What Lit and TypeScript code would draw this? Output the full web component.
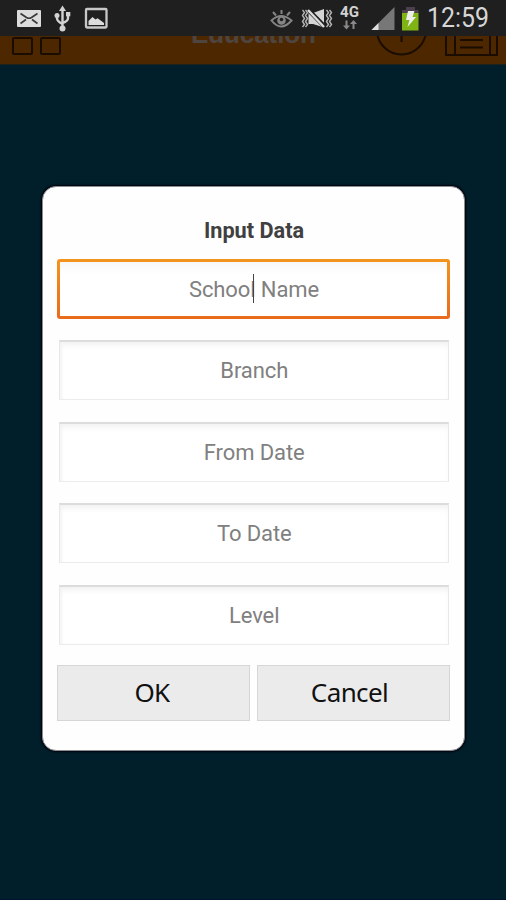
import { LitElement, html, css, svg } from "lit";
import { customElement, property } from "lit/decorators.js";

@customElement("status-bar")
class StatusBar extends LitElement {
  static styles = css`
    :host { display: block; height: 36px; background: #1f1f1f; }
    svg { display: block; }
    .clock { font: 27px Roboto, sans-serif; fill: #d6d6d6; }
    .net { font: bold 15px Roboto, sans-serif; fill: #d2d2d2; }
  `;
  render() {
    return html`<svg width="506" height="36" viewBox="0 0 506 36">
      <rect x="17" y="10" width="24" height="17" rx="1" fill="#dcdcdc" />
      <path d="M20.500 13.500l6 4q2.500 1.500 5 0l6-4M20.500 23.500l5.500-4M37.500 23.500l-5.500-4" fill="none" stroke="#3a3a3a" stroke-width="1.700" />
      <g fill="none" stroke="#d2d2d2" stroke-width="2.400">
        <path d="M62.500 29V9M57 16v2.500q0 2.500 5.500 5.500M68 14v4.500q0 2.500-5.500 4.500" />
      </g>
      <g fill="#d2d2d2">
        <path d="M62.500 5.500l3.500 5.500h-7z" /><circle cx="62.500" cy="28.500" r="3" />
        <circle cx="57" cy="15.500" r="2.500" /><rect x="66" y="12" width="4.300" height="4.300" />
      </g>
      <rect x="86" y="9" width="20.500" height="18.500" rx="1" fill="none" stroke="#c8c8c8" stroke-width="2.300" />
      <path d="M88.500 25v-4l4-4 3 2.500 2-1.200 2.500 1.700 4 3v2z" fill="#dcdcdc" />
      <g fill="none" stroke="#858585">
        <path d="M271.500 20.500q9.500-9 20 0-10.500 12-20 0z" stroke-width="2" />
        <path d="M273 12l3 3.500M281.500 10v4M290 12l-3 3.500" stroke-width="2" />
      </g>
      <circle cx="281.500" cy="20.500" r="4.300" fill="#858585" /><circle cx="281.500" cy="19.500" r="1.800" fill="#1f1f1f" />
      <path d="M308.500 13h4.500L324 9v18.500L313 24h-4.500z" fill="#d4d4d4" />
      <path d="M307 8.500l18 18.500" stroke="#1f1f1f" stroke-width="4.600" />
      <path d="M308 10l16 17" stroke="#dcdcdc" stroke-width="2.400" />
      <path d="M302.500 10l2 2.500-2 3 2 3-2 3 2 3-2 2.500M305.500 10l2 2.500-2 3 2 3-2 3 2 3-2 2.500M326.500 10l2 2.500-2 3 2 3-2 3 2 3-2 2.500M329.500 10l2 2.500-2 3 2 3-2 3 2 3-2 2.500" fill="none" stroke="#b4b4b4" stroke-width="1.400" />
      <text class="net" x="340" y="17" textLength="19" lengthAdjust="spacingAndGlyphs">4G</text>
      <path d="M346.500 20.500v6M353.500 29v-6" stroke="#8a8a8a" stroke-width="2" />
      <path d="M343 25.500h7l-3.500 4zM350 24h7l-3.500-4z" fill="#8a8a8a" />
      <path d="M371.500 30L394.500 7v23z" fill="#777" /><path d="M371.500 30l7-7v7z" fill="#e0e0e0" />
      <rect x="406" y="7" width="9" height="4" fill="#4b404c" /><rect x="402" y="10" width="16.500" height="3.500" fill="#4b404c" />
      <rect x="402" y="13" width="16.500" height="17.500" fill="#80b314" />
      <path d="M408 11h6.500l-2 6h3.500l-8.500 10 2-7h-3.500z" fill="#eee" />
      <text class="clock" x="427" y="27" textLength="62" lengthAdjust="spacingAndGlyphs">12:59</text>
    </svg>`;
  }
}

@customElement("app-header")
class AppHeader extends LitElement {
  static styles = css`
    :host { display: block; height: 29px; background: #4d2700; overflow: hidden; }
    svg { display: block; }
    .title { font: bold 26px "Liberation Sans", sans-serif; fill: #4e4540; }
  `;
  render() {
    return html`<svg width="506" height="29" viewBox="0 36 506 29">
      <rect width="506" height="1" y="64" fill="#20231c" />
      <g fill="none" stroke="#1a0d00" stroke-width="2">
        ${[13, 41].map((x) => svg`<rect x=${x} y="38" width="19" height="16" rx="1" />`)}
        <circle cx="401.500" cy="30" r="24.500" /><path d="M401.500 36v6" />
        <path d="M446 30V55H497V30M455 30V55M490 30V55M460 40h23M460 47.500h23" />
      </g>
      <text class="title" x="191" y="42.500" textLength="125">Education</text>
    </svg>`;
  }
}

@customElement("text-field")
class TextField extends LitElement {
  @property() label = "";
  @property({ type: Boolean }) active = false;
  static styles = css`
    :host { display: block; height: 60px; }
    .field {
      position: relative; box-sizing: border-box; height: 60px; margin: 0 1.5px 0 2px; padding-left: 1px;
      display: flex; align-items: center; justify-content: center;
      border: 1px solid #e8e8e8; border-top: 2px solid #dcdcdc; border-bottom-color: #ececec;
      background: #fff; box-shadow: inset 0 5px 6px -2px #f1f1f1, inset 3px 0 4px -2px #f1f1f1;
      font: 22px Roboto, sans-serif; color: #808080; letter-spacing: -0.1px;
    }
    .active {
      margin: 0; padding-top: 2px; border: 3px solid transparent; border-radius: 3px; box-shadow: none;
      background: linear-gradient(#f7f7f7, #fff 12px) padding-box, linear-gradient(#f3941d, #e96a1c) border-box;
    }
    .caret { position: absolute; left: 193px; top: 12px; width: 1px; height: 29px; background: #444; }
  `;
  render() {
    return html`<div class="field ${this.active ? "active" : ""}">
      <span>${this.label}</span>${this.active ? html`<i class="caret"></i>` : ""}
    </div>`;
  }
}

@customElement("app-root")
class AppRoot extends LitElement {
  static styles = css`
    :host {
      display: block; box-sizing: border-box; height: 900px; overflow: hidden;
      background: #001f2a; border-bottom: 1px solid #001430;
    }
    .dialog {
      box-sizing: border-box; width: 423px; height: 565px; margin: 120.5px 0 0 42px;
      padding: 28px 14px 0; border-radius: 14px; background: #fefefe;
      border: 1px solid #8b8b90; box-shadow: 0 0 2px 1px #00000c;
    }
    .heading {
      margin: 0 0 13px; height: 31px; text-align: center; padding-left: 1px;
      font: bold 21.700px/31px Roboto, sans-serif; color: #404040;
    }
    .fields { display: grid; gap: 21.5px; }
    .actions { display: grid; grid-template-columns: 1fr 1fr; gap: 7px; margin-top: 20px; }
    .button {
      box-sizing: border-box; min-width: 0; height: 56px; padding: 0 3px 1px 0; border: 1px solid #d6d6d6; border-radius: 0;
      background: #ebebeb; font: 26px "Noto Sans", sans-serif; letter-spacing: -0.6px; color: #111;
    }
    .button:last-child { padding-right: 8px; }
  `;
  render() {
    return html`
      <status-bar></status-bar>
      <app-header></app-header>
      <div class="dialog">
        <h1 class="heading">Input Data</h1>
        <div class="fields">
          ${["School Name", "Branch", "From Date", "To Date", "Level"].map(
            (label, i) => html`<text-field .label=${label} .active=${i === 0}></text-field>`
          )}
        </div>
        <div class="actions">
          <button class="button">OK</button>
          <button class="button">Cancel</button>
        </div>
      </div>
    `;
  }
}
